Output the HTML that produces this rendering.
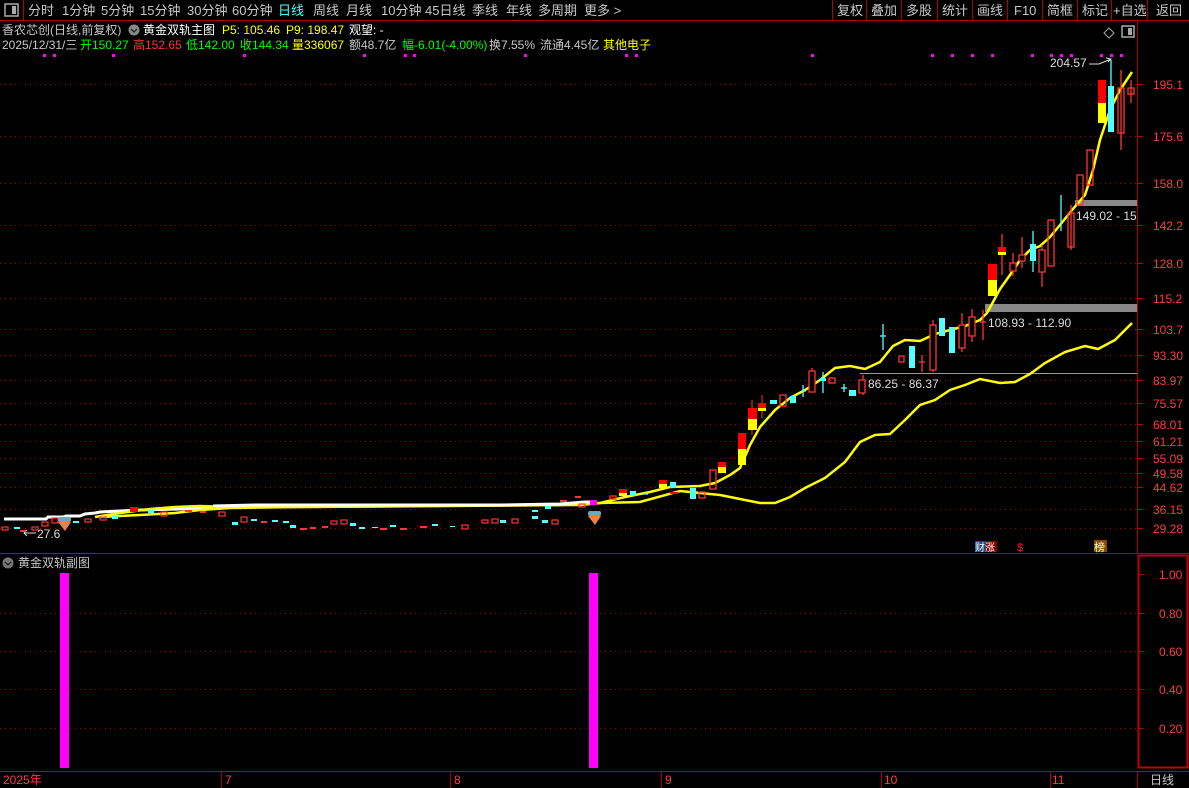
<!DOCTYPE html>
<html><head><meta charset="utf-8"><style>
html,body{margin:0;padding:0;background:#000;width:1189px;height:788px;overflow:hidden}
svg{display:block;font-family:"Liberation Sans","Noto Sans CJK SC",sans-serif}
</style></head><body>
<svg width="1189" height="788" viewBox="0 0 1189 788" xmlns="http://www.w3.org/2000/svg">
<rect width="1189" height="788" fill="#000"/>
<!-- toolbar -->
<line x1="0" y1="20.5" x2="1189" y2="20.5" stroke="#b00000"/>
<line x1="23.5" y1="0" x2="23.5" y2="20" stroke="#b00000"/>
<rect x="5" y="4" width="13" height="12" fill="none" stroke="#aaa" stroke-width="1.5"/><rect x="12" y="6" width="4" height="8" fill="#aaa"/>
<g font-size="13" fill="#c8c8c8">
<text x="28" y="15">分时</text><text x="62" y="15">1分钟</text><text x="101" y="15">5分钟</text><text x="140" y="15">15分钟</text><text x="187" y="15">30分钟</text><text x="232" y="15">60分钟</text><text x="278" y="15" fill="#5ff">日线</text><text x="313" y="15">周线</text><text x="346" y="15">月线</text><text x="381" y="15">10分钟</text><text x="425" y="15">45日线</text><text x="472" y="15">季线</text><text x="506" y="15">年线</text><text x="538" y="15">多周期</text><text x="584" y="15">更多 &gt;</text>
<text x="837" y="15">复权</text><text x="871" y="15">叠加</text><text x="906" y="15">多股</text><text x="942" y="15">统计</text><text x="977" y="15">画线</text><text x="1014" y="15">F10</text><text x="1047" y="15">简框</text><text x="1082" y="15">标记</text><text x="1113" y="15">+自选</text><text x="1156" y="15">返回</text>
</g>
<g stroke="#b00000"><line x1="832.5" y1="0" x2="832.5" y2="20"/><line x1="866.5" y1="0" x2="866.5" y2="20"/><line x1="901.5" y1="0" x2="901.5" y2="20"/><line x1="937.5" y1="0" x2="937.5" y2="20"/><line x1="972.5" y1="0" x2="972.5" y2="20"/><line x1="1007.5" y1="0" x2="1007.5" y2="20"/><line x1="1042.5" y1="0" x2="1042.5" y2="20"/><line x1="1077.5" y1="0" x2="1077.5" y2="20"/><line x1="1111.5" y1="0" x2="1111.5" y2="20"/><line x1="1147.5" y1="0" x2="1147.5" y2="20"/></g>
<!-- info lines -->
<g font-size="12">
<text x="2" y="34" fill="#c8c8c8">香农芯创(日线,前复权)</text>
<circle cx="134" cy="30" r="5.5" fill="#888"/><path d="M131 29 l3 3 l3 -3" stroke="#222" fill="none" stroke-width="1.3"/>
<text x="143" y="34" fill="#fff">黄金双轨主图</text>
<text x="222" y="34" fill="#ff0">P5: 105.46</text><text x="286" y="34" fill="#ff0">P9: 198.47</text><text x="349" y="34" fill="#fff">观望: -</text>
<text x="2" y="49" fill="#c8c8c8">2025/12/31/三</text>
<text x="80" y="49" fill="#0f0">开150.27</text><text x="133" y="49" fill="#f33">高152.65</text><text x="186" y="49" fill="#0f0">低142.00</text><text x="240" y="49" fill="#0f0">收144.34</text><text x="292" y="49" fill="#ff0">量336067</text><text x="349" y="49" fill="#c8c8c8">额48.7亿</text><text x="402" y="49" fill="#0f0">幅-6.01(-4.00%)</text><text x="489" y="49" fill="#c8c8c8">换7.55%</text><text x="540" y="49" fill="#c8c8c8">流通4.45亿</text><text x="603" y="49" fill="#ff0">其他电子</text>
</g>
<path d="M1109 28 l5 5 l-5 5 l-5 -5z" fill="none" stroke="#aaa"/>
<rect x="1122" y="26" width="12" height="11" fill="none" stroke="#aaa" stroke-width="1.5"/><rect x="1128" y="28" width="4" height="7" fill="#aaa"/>
<!-- magenta dots -->
<g fill="#f0f"><rect x="43" y="54" width="3" height="3"/><rect x="53" y="54" width="3" height="3"/><rect x="112" y="54" width="3" height="3"/><rect x="243" y="54" width="3" height="3"/><rect x="363" y="54" width="3" height="3"/><rect x="404" y="54" width="3" height="3"/><rect x="413" y="54" width="3" height="3"/><rect x="524" y="54" width="3" height="3"/><rect x="625" y="54" width="3" height="3"/><rect x="635" y="54" width="3" height="3"/>
<rect x="811" y="54" width="3" height="3"/><rect x="931" y="54" width="3" height="3"/><rect x="951" y="54" width="3" height="3"/><rect x="971" y="54" width="3" height="3"/><rect x="991" y="54" width="3" height="3"/><rect x="1031" y="54" width="3" height="3"/><rect x="1050" y="54" width="3" height="3"/><rect x="1060" y="54" width="3" height="3"/><rect x="1070" y="54" width="3" height="3"/><rect x="1100" y="54" width="3" height="3"/><rect x="1110" y="54" width="3" height="3"/><rect x="1120" y="54" width="3" height="3"/></g>
<!-- grid -->
<g stroke="#a00000" stroke-dasharray="1 4">
<line x1="0" y1="84.5" x2="1137" y2="84.5"/><line x1="0" y1="136.5" x2="1137" y2="136.5"/><line x1="0" y1="183.5" x2="1137" y2="183.5"/><line x1="0" y1="225.5" x2="1137" y2="225.5"/><line x1="0" y1="263.5" x2="1137" y2="263.5"/><line x1="0" y1="298.5" x2="1137" y2="298.5"/><line x1="0" y1="329.5" x2="1137" y2="329.5"/><line x1="0" y1="355.5" x2="1137" y2="355.5"/><line x1="0" y1="380.5" x2="1137" y2="380.5"/><line x1="0" y1="403.5" x2="1137" y2="403.5"/><line x1="0" y1="424.5" x2="1137" y2="424.5"/><line x1="0" y1="441.5" x2="1137" y2="441.5"/><line x1="0" y1="458.5" x2="1137" y2="458.5"/><line x1="0" y1="473.5" x2="1137" y2="473.5"/><line x1="0" y1="487.5" x2="1137" y2="487.5"/><line x1="0" y1="509.5" x2="1137" y2="509.5"/><line x1="0" y1="528.5" x2="1137" y2="528.5"/>
<line x1="0" y1="613.5" x2="1137" y2="613.5"/><line x1="0" y1="651.5" x2="1137" y2="651.5"/><line x1="0" y1="689.5" x2="1137" y2="689.5"/><line x1="0" y1="728.5" x2="1137" y2="728.5"/>
</g>
<!-- right axis -->
<line x1="1137.5" y1="21" x2="1137.5" y2="553" stroke="#b00000"/>
<g stroke="#b00000"><line x1="1137" y1="84.5" x2="1143" y2="84.5"/><line x1="1137" y1="136.5" x2="1143" y2="136.5"/><line x1="1137" y1="183.5" x2="1143" y2="183.5"/><line x1="1137" y1="225.5" x2="1143" y2="225.5"/><line x1="1137" y1="263.5" x2="1143" y2="263.5"/><line x1="1137" y1="298.5" x2="1143" y2="298.5"/><line x1="1137" y1="329.5" x2="1143" y2="329.5"/><line x1="1137" y1="355.5" x2="1143" y2="355.5"/><line x1="1137" y1="380.5" x2="1143" y2="380.5"/><line x1="1137" y1="403.5" x2="1143" y2="403.5"/><line x1="1137" y1="424.5" x2="1143" y2="424.5"/><line x1="1137" y1="441.5" x2="1143" y2="441.5"/><line x1="1137" y1="458.5" x2="1143" y2="458.5"/><line x1="1137" y1="473.5" x2="1143" y2="473.5"/><line x1="1137" y1="487.5" x2="1143" y2="487.5"/><line x1="1137" y1="509.5" x2="1143" y2="509.5"/><line x1="1137" y1="528.5" x2="1143" y2="528.5"/></g>
<g font-size="12" fill="#ff3c3c">
<text x="1153" y="89">195.1</text><text x="1153" y="141">175.6</text><text x="1153" y="188">158.0</text><text x="1153" y="230">142.2</text><text x="1153" y="268">128.0</text><text x="1153" y="303">115.2</text><text x="1153" y="334">103.7</text><text x="1153" y="360">93.30</text><text x="1153" y="385">83.97</text><text x="1153" y="408">75.57</text><text x="1153" y="429">68.01</text><text x="1153" y="446">61.21</text><text x="1153" y="463">55.09</text><text x="1153" y="478">49.58</text><text x="1153" y="492">44.62</text><text x="1153" y="514">36.15</text><text x="1153" y="533">29.28</text>
</g>
<!-- gray bands -->
<rect x="1075" y="200" width="62" height="6" fill="#888"/>
<rect x="985" y="304" width="152" height="8" fill="#888"/>
<line x1="860" y1="373.5" x2="1137" y2="373.5" stroke="#999"/>
<g font-size="12" fill="#ddd"><text x="1076" y="220">149.02 - 15</text><text x="988" y="327">108.93 - 112.90</text><text x="868" y="388">86.25 - 86.37</text><text x="1050" y="67">204.57</text><text x="37" y="538">27.6</text></g>
<path d="M1089 64 h10 l12 -5 M1106 58 l5 1 l-3 3" stroke="#ddd" fill="none"/>
<path d="M24 533 h12 M27 530 l-3 3 l3 3" stroke="#ddd" fill="none"/>
<!-- white line (left part) -->
<polyline fill="none" stroke="#fff" stroke-width="3" points="4,519 46,519 48,517 63,517 66,516 80,516 85,514 95,513 100,512 120,511 140,510 180,509 213,508"/>
<!-- long yellow -->
<polyline fill="none" stroke="#ff0" stroke-width="2.5" points="100,517 140,515 175,513 200,510 230,508 300,507 420,506 560,505 600,503 640,502 680,491 700,493 720,495 740,499 760,503 775,503 790,497 805,488 825,478 845,462 860,442 875,435 890,434 905,420 920,405 935,400 950,390 965,385 980,379 1000,383 1015,382 1030,374 1045,363 1065,352 1085,346 1098,349 1115,340 1132,323"/>
<!-- short yellow -->
<polyline fill="none" stroke="#ff0" stroke-width="2.5" points="95,517 120,513 150,509 175,507 200,506 230,507 300,507 450,506 580,505 600,503 625,497 650,492 670,487 700,486 715,483 730,475 740,468 750,445 760,427 775,410 790,398 805,390 820,380 835,368 850,366 865,369 880,362 893,346 905,340 920,341 935,334 950,330 965,326 980,320 987,313 993,302 1000,289 1010,275 1020,260 1030,250 1040,246 1050,237 1060,225 1072,210 1085,195 1093,170 1100,140 1110,110 1120,90 1132,72"/>
<!-- white line (right part, on top) -->
<polyline fill="none" stroke="#fff" stroke-width="3" points="213,506 255,505 300,505 385,505 500,505 560,504 585,502 592,502"/>
<!-- candles right side -->
<g stroke="#f33" fill="none" stroke-width="1.3">
<line x1="1121" y1="70" x2="1121" y2="150"/><rect x="1118" y="88" width="6" height="45"/>
<line x1="1131" y1="80" x2="1131" y2="103"/><rect x="1128" y="88" width="6" height="6"/>
<rect x="1087" y="150" width="6" height="35"/><rect x="1077" y="175" width="6" height="30"/>
<line x1="1071" y1="205" x2="1071" y2="250"/><rect x="1068" y="213" width="6" height="34"/>
<rect x="1048" y="220" width="6" height="46"/>
<line x1="1042" y1="245" x2="1042" y2="287"/><rect x="1039" y="250" width="6" height="22" fill="#000"/>
<line x1="1022" y1="237" x2="1022" y2="268"/><rect x="1019" y="255" width="6" height="6" fill="#000"/>
<line x1="1013" y1="253" x2="1013" y2="276"/><rect x="1010" y="263" width="6" height="8" fill="#000"/>
<line x1="1002" y1="234" x2="1002" y2="275"/>
<line x1="983" y1="310" x2="983" y2="340"/><line x1="980" y1="322" x2="986" y2="322"/>
<line x1="972" y1="309" x2="972" y2="342"/><rect x="969" y="317" width="6" height="19" fill="#000"/>
<line x1="962" y1="313" x2="962" y2="352"/><rect x="959" y="325" width="6" height="23" fill="#000"/>
<line x1="933" y1="320" x2="933" y2="372"/><rect x="930" y="325" width="6" height="45" fill="#000"/>
<line x1="922" y1="355" x2="922" y2="372"/><line x1="919" y1="362" x2="925" y2="362"/>
<rect x="899" y="356" width="5" height="6"/>
<line x1="863" y1="375" x2="863" y2="395"/><rect x="859" y="380" width="6" height="13" fill="#000"/>
<rect x="829" y="378" width="6" height="5"/>
<line x1="812" y1="368" x2="812" y2="392"/><rect x="809" y="371" width="6" height="21" fill="#000"/>
<rect x="780" y="395" width="6" height="11"/>
<rect x="710" y="470" width="6" height="19"/><rect x="699" y="492" width="6" height="6"/>
<rect x="610" y="496" width="6" height="3"/>
</g>
<g fill="#5ff" stroke="#5ff" stroke-width="1.3">
<line x1="1111" y1="60" x2="1111" y2="132"/><rect x="1108" y="86" width="6" height="46" stroke="none"/>
<line x1="1061" y1="195" x2="1061" y2="231"/>
<line x1="1033" y1="231" x2="1033" y2="272"/><rect x="1030" y="244" width="6" height="17" stroke="none"/>
<rect x="949" y="327" width="6" height="26" stroke="none"/><rect x="939" y="318" width="6" height="18" stroke="none"/>
<rect x="909" y="346" width="6" height="22" stroke="none"/>
<line x1="883" y1="324" x2="883" y2="350"/><line x1="880" y1="336" x2="886" y2="336"/>
<rect x="849" y="390" width="7" height="6" stroke="none"/>
<line x1="841" y1="388" x2="847" y2="388"/><line x1="844" y1="384" x2="844" y2="392"/>
<line x1="823" y1="372" x2="823" y2="393"/><rect x="820" y="378" width="6" height="3" stroke="none"/>
<line x1="801" y1="391" x2="806" y2="391"/><line x1="803" y1="385" x2="803" y2="397"/>
<rect x="790" y="396" width="6" height="7" stroke="none"/><rect x="770" y="400" width="7" height="4" stroke="none"/>
<rect x="690" y="488" width="6" height="11" stroke="none"/><rect x="670" y="482" width="6" height="6" stroke="none"/>
<line x1="643" y1="494" x2="648" y2="494"/><rect x="630" y="491" width="6" height="5" stroke="none"/>
</g>
<g>
<rect x="1098" y="80" width="8" height="23" fill="#f00"/><rect x="1098" y="103" width="8" height="20" fill="#ff0"/>
<rect x="998" y="247" width="8" height="5" fill="#f00"/><rect x="998" y="252" width="8" height="3" fill="#ff0"/>
<rect x="988" y="264" width="9" height="16" fill="#f00"/><rect x="988" y="280" width="9" height="16" fill="#ff0"/>
<line x1="762" y1="395" x2="762" y2="418" stroke="#f33"/><rect x="758" y="403" width="8" height="5" fill="#f00"/><rect x="758" y="408" width="8" height="3" fill="#ff0"/>
<line x1="752" y1="400" x2="752" y2="435" stroke="#f33"/><rect x="748" y="408" width="9" height="11" fill="#f00"/><rect x="748" y="419" width="9" height="11" fill="#ff0"/>
<rect x="738" y="433" width="8" height="16" fill="#f00"/><rect x="738" y="449" width="8" height="16" fill="#ff0"/>
<rect x="718" y="462" width="8" height="5" fill="#f00"/><rect x="718" y="467" width="8" height="6" fill="#ff0"/>
<rect x="659" y="480" width="8" height="4" fill="#f00"/><rect x="659" y="484" width="8" height="4" fill="#ff0"/>
<rect x="619" y="489" width="8" height="4" fill="#f00"/><rect x="619" y="493" width="8" height="3" fill="#ff0"/>
<rect x="670" y="492" width="8" height="2" fill="#f00"/>
<rect x="130" y="507" width="8" height="5" fill="#f00"/>
<rect x="590" y="500" width="7" height="5" fill="#f0f"/>
</g>
<!-- flat small candles -->
<g fill="none" stroke="#f33" stroke-width="1.2">
<rect x="2" y="527" width="6" height="3"/><rect x="32" y="527" width="6" height="3"/><rect x="42" y="522" width="6" height="4"/><rect x="52" y="518" width="6" height="5"/><rect x="85" y="519" width="6" height="3"/><rect x="100" y="517" width="6" height="3"/><rect x="161" y="512" width="6" height="4"/><rect x="219" y="512" width="6" height="4"/><rect x="241" y="517" width="6" height="5"/><rect x="331" y="521" width="6" height="3"/><rect x="341" y="520" width="6" height="4"/><rect x="462" y="525" width="6" height="4"/><rect x="482" y="520" width="6" height="3"/><rect x="492" y="519" width="6" height="4"/><rect x="512" y="519" width="6" height="4"/><rect x="552" y="520" width="6" height="4"/><rect x="579" y="504" width="6" height="3"/></g>
<g fill="#f33"><rect x="20" y="530" width="6" height="2"/><rect x="185" y="510" width="7" height="2"/><rect x="200" y="511" width="6" height="2"/><rect x="261" y="521" width="6" height="2"/><rect x="300" y="528" width="7" height="2"/><rect x="310" y="527" width="6" height="2"/><rect x="322" y="526" width="6" height="2"/><rect x="380" y="528" width="7" height="2"/><rect x="400" y="528" width="7" height="2"/><rect x="420" y="526" width="7" height="2"/><rect x="560" y="500" width="7" height="2"/><rect x="575" y="496" width="6" height="2"/></g>
<g fill="#5ff"><rect x="14" y="527" width="6" height="2"/><rect x="73" y="521" width="6" height="2"/><rect x="112" y="516" width="6" height="3"/><rect x="148" y="510" width="6" height="3"/><rect x="232" y="522" width="6" height="3"/><rect x="251" y="519" width="6" height="2"/><rect x="272" y="520" width="6" height="2"/><rect x="283" y="521" width="6" height="2"/><rect x="290" y="525" width="6" height="3"/><rect x="350" y="523" width="6" height="3"/><rect x="359" y="527" width="6" height="2"/><rect x="372" y="527" width="6" height="1"/><rect x="390" y="525" width="6" height="2"/><rect x="432" y="524" width="6" height="2"/><rect x="450" y="526" width="5" height="1"/><rect x="500" y="520" width="6" height="3"/><rect x="532" y="516" width="6" height="3"/><rect x="542" y="520" width="6" height="3"/><rect x="545" y="506" width="6" height="3"/><rect x="532" y="510" width="6" height="2"/></g>
<!-- diamond icons -->
<g><path d="M58 522 h13 l-6 9z" fill="#f08040"/><rect x="58" y="517" width="13" height="5" rx="2" fill="#6ab"/>
<path d="M588 516 h13 l-6 9z" fill="#f08040"/><rect x="588" y="511" width="13" height="5" rx="2" fill="#6ab"/></g>
<!-- bottom badges -->
<rect x="975" y="541" width="11" height="11" fill="#1a4a80"/><rect x="986" y="541" width="11" height="11" fill="#8a0000"/>
<text x="975" y="551" font-size="10" fill="#fff">财涨</text>
<text x="1017" y="551" font-size="11" fill="#f22">$</text>
<rect x="1094" y="540" width="13" height="12" fill="#8a4a00"/><text x="1094" y="551" font-size="11" fill="#fff">榜</text>
<!-- sub chart -->
<line x1="0" y1="553.5" x2="1189" y2="553.5" stroke="#b00000"/>
<circle cx="8" cy="563" r="5.5" fill="#777"/><path d="M5 562 l3 3 l3 -3" stroke="#222" fill="none" stroke-width="1.3"/>
<text x="18" y="567" font-size="12" fill="#c8c8c8">黄金双轨副图</text>
<rect x="60" y="573" width="9" height="195" fill="#f0f"/>
<rect x="589" y="573" width="9" height="195" fill="#f0f"/>
<rect x="1138.5" y="555.5" width="49" height="212" fill="none" stroke="#c00000" stroke-width="2"/>
<g stroke="#b00000"><line x1="1139" y1="574.5" x2="1144" y2="574.5"/><line x1="1139" y1="613.5" x2="1144" y2="613.5"/><line x1="1139" y1="651.5" x2="1144" y2="651.5"/><line x1="1139" y1="689.5" x2="1144" y2="689.5"/><line x1="1139" y1="728.5" x2="1144" y2="728.5"/></g>
<g font-size="12" fill="#ff3c3c"><text x="1159" y="579">1.00</text><text x="1159" y="618">0.80</text><text x="1159" y="656">0.60</text><text x="1159" y="694">0.40</text><text x="1159" y="733">0.20</text></g>
<!-- bottom axis -->
<line x1="0" y1="771.5" x2="1189" y2="771.5" stroke="#b00000"/>
<g stroke="#b00000"><line x1="221.5" y1="771" x2="221.5" y2="788"/><line x1="450.5" y1="771" x2="450.5" y2="788"/><line x1="661.5" y1="771" x2="661.5" y2="788"/><line x1="881.5" y1="771" x2="881.5" y2="788"/><line x1="1050.5" y1="771" x2="1050.5" y2="788"/><line x1="1137.5" y1="771" x2="1137.5" y2="788"/></g>
<g font-size="12" fill="#ff3c3c"><text x="3" y="784">2025年</text><text x="225" y="784">7</text><text x="454" y="784">8</text><text x="665" y="784">9</text><text x="884" y="784">10</text><text x="1052" y="784">11</text></g>
<text x="1150" y="784" font-size="12" fill="#c8c8c8">日线</text>
</svg>
</body></html>
